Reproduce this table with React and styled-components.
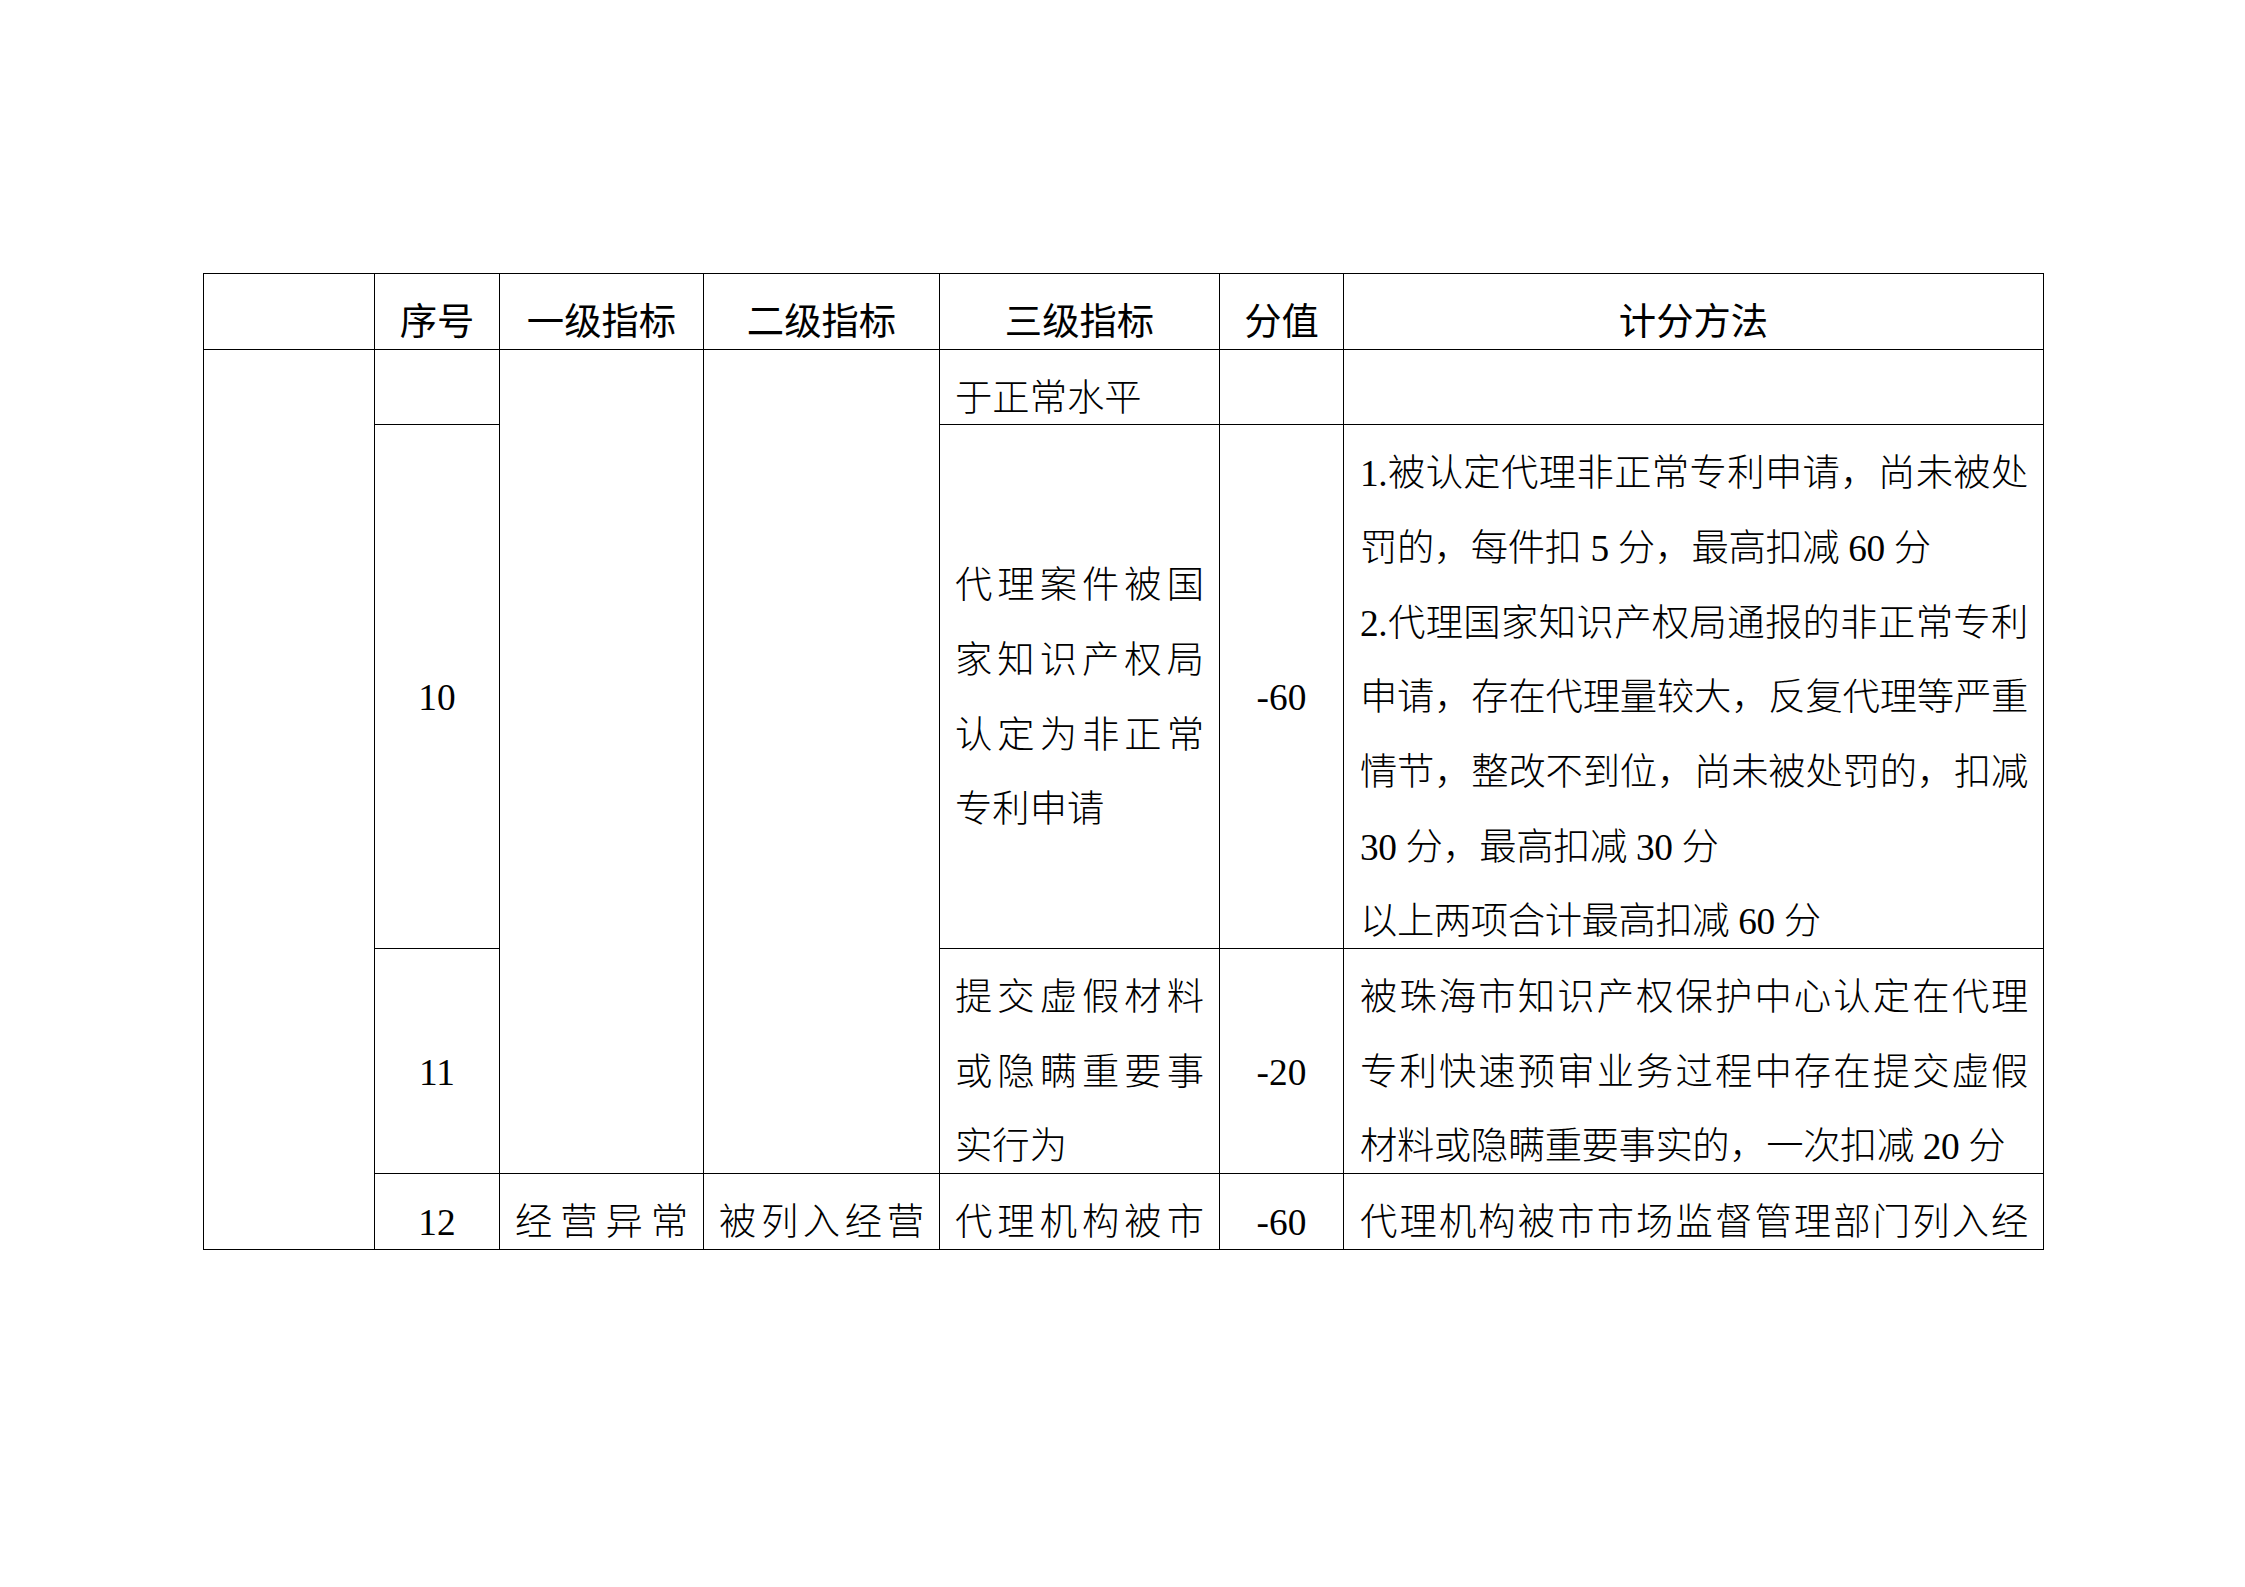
import styled, { createGlobalStyle } from "styled-components";

const GlobalStyle = createGlobalStyle`
  html, body {
    margin: 0;
    padding: 0;
    background: #ffffff;
  }
`;

const LINE = 74.67;

const columns = [171, 125, 204, 236, 280, 124, 700];

const headers = ["", "序号", "一级指标", "二级指标", "三级指标", "分值", "计分方法"];

const Page = styled.div`
  width: 2245px;
  min-height: 1587px;
  padding: 273px 0 0 203px;
  box-sizing: border-box;
  font-family: "Liberation Serif", "Noto Sans CJK SC", serif;
  font-size: 37.33px;
  color: #000;
`;

const Table = styled.table`
  width: 1840px;
  table-layout: fixed;
  border-collapse: collapse;
`;

const Cell = styled.td`
  border: 1px solid #000;
  padding: 0 15px;
  vertical-align: middle;
  text-align: ${(p) => p.$align || "left"};
  font-weight: 300;
`;

// the scoring column holds the long paragraphs, set a touch tighter
const MethodCell = styled(Cell)`
  padding: 0 15px 0 16px;
  letter-spacing: -0.4px;
`;

const HeadCell = styled.th`
  border: 1px solid #000;
  padding: 0 10px;
  vertical-align: middle;
  text-align: center;
  font-weight: 400;
`;

const Line = styled.div`
  height: ${LINE}px;
  line-height: 97px;
  text-align: ${(p) => (p.$justify ? "justify" : "inherit")};
  text-align-last: ${(p) => (p.$justify ? "justify" : "auto")};
`;

// lines marked full are stretched to the cell width, like the justified
// lines of the source document
const Text = ({ lines, full = 0 }) =>
  lines.map((l, i) => (
    <Line key={i} $justify={i < full}>
      {l}
    </Line>
  ));

const Empty = () => <Line />;

export default function App() {
  return (
    <Page>
      <GlobalStyle />
      <Table>
        <colgroup>
          {columns.map((w, i) => (
            <col key={i} style={{ width: w }} />
          ))}
        </colgroup>
        <thead>
          <tr>
            {headers.map((h, i) => (
              <HeadCell key={i}>
                <Line>{h}</Line>
              </HeadCell>
            ))}
          </tr>
        </thead>
        <tbody>
          <tr>
            <Cell rowSpan={4} />
            <Cell $align="center">
              <Empty />
            </Cell>
            <Cell rowSpan={3} />
            <Cell rowSpan={3} />
            <Cell>
              <Text lines={["于正常水平"]} />
            </Cell>
            <Cell $align="center">
              <Empty />
            </Cell>
            <MethodCell>
              <Empty />
            </MethodCell>
          </tr>
          <tr>
            <Cell $align="center">
              <Line>10</Line>
            </Cell>
            <Cell>
              <Text
                lines={["代理案件被国", "家知识产权局", "认定为非正常", "专利申请"]}
                full={3}
              />
            </Cell>
            <Cell $align="center">
              <Line>-60</Line>
            </Cell>
            <MethodCell>
              <Line $justify>1.被认定代理非正常专利申请，尚未被处</Line>
              <Line>罚的，每件扣 5 分，最高扣减 60 分</Line>
              <Line $justify>2.代理国家知识产权局通报的非正常专利</Line>
              <Line $justify>申请，存在代理量较大，反复代理等严重</Line>
              <Line $justify>情节，整改不到位，尚未被处罚的，扣减</Line>
              <Line>30 分，最高扣减 30 分</Line>
              <Line>以上两项合计最高扣减 60 分</Line>
            </MethodCell>
          </tr>
          <tr>
            <Cell $align="center">
              <Line>11</Line>
            </Cell>
            <Cell>
              <Text lines={["提交虚假材料", "或隐瞒重要事", "实行为"]} full={2} />
            </Cell>
            <Cell $align="center">
              <Line>-20</Line>
            </Cell>
            <MethodCell>
              <Text
                lines={[
                  "被珠海市知识产权保护中心认定在代理",
                  "专利快速预审业务过程中存在提交虚假",
                  "材料或隐瞒重要事实的，一次扣减 20 分",
                ]}
                full={2}
              />
            </MethodCell>
          </tr>
          <tr>
            <Cell $align="center">
              <Line>12</Line>
            </Cell>
            <Cell>
              <Text lines={["经营异常"]} full={1} />
            </Cell>
            <Cell>
              <Text lines={["被列入经营"]} full={1} />
            </Cell>
            <Cell>
              <Text lines={["代理机构被市"]} full={1} />
            </Cell>
            <Cell $align="center">
              <Line>-60</Line>
            </Cell>
            <MethodCell>
              <Text lines={["代理机构被市市场监督管理部门列入经"]} full={1} />
            </MethodCell>
          </tr>
        </tbody>
      </Table>
    </Page>
  );
}
